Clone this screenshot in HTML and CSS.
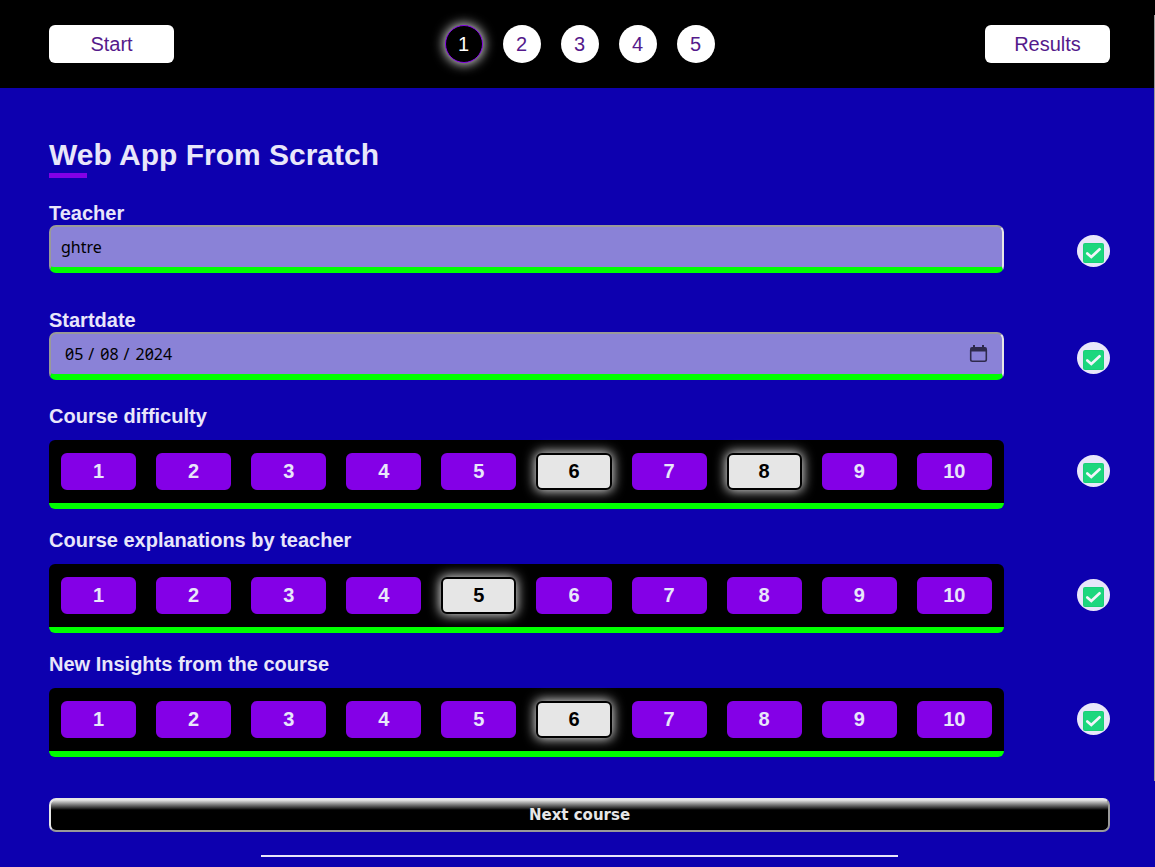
FILE: index.html
```
<!DOCTYPE html>
<html lang="en">
<head>
<meta charset="utf-8">
<meta name="viewport" content="width=device-width, initial-scale=1">
<title>Web App From Scratch</title>
<link rel="stylesheet" href="styles.css">
</head>
<body>
<svg class="sprite" aria-hidden="true">
  <symbol id="tick" viewBox="0 0 21 20">
    <rect width="21" height="20" rx="2" fill="#19cf78"/>
    <rect x="1" y="1" width="19" height="18" rx="1" fill="#1cd77e"/>
    <path d="M4.3 10.4 8.3 14 16.6 6.3" fill="none" stroke="#f4f4fb" stroke-width="2.7" stroke-linecap="round"/>
  </symbol>
</svg>
<header class="topbar">
  <a class="pill" href="#start">Start</a>
  <nav class="steps" aria-label="Courses">
    <a class="step current" href="#course-1" aria-current="page">1</a>
    <a class="step" href="#course-2">2</a>
    <a class="step" href="#course-3">3</a>
    <a class="step" href="#course-4">4</a>
    <a class="step" href="#course-5">5</a>
  </nav>
  <a class="pill" href="#results">Results</a>
</header>
<main class="page">
  <h1 class="title">Web App From Scratch</h1>
  <form class="form">
    <div class="field">
      <label class="label" for="teacher">Teacher</label>
      <div class="row">
        <input class="control" id="teacher" type="text" value="ghtre">
        <span class="check"><svg class="tick" aria-hidden="true"><use href="#tick"/></svg></span>
      </div>
    </div>
    <div class="field">
      <label class="label" for="startdate">Startdate</label>
      <div class="row">
        <input class="control date" id="startdate" type="date" value="2024-05-08">
        <span class="check"><svg class="tick" aria-hidden="true"><use href="#tick"/></svg></span>
      </div>
    </div>
    <fieldset class="rating">
      <legend class="label">Course difficulty</legend>
      <div class="row">
        <div class="scale">
          <label class="score"><input type="checkbox" name="difficulty"><span>1</span></label>
          <label class="score"><input type="checkbox" name="difficulty"><span>2</span></label>
          <label class="score"><input type="checkbox" name="difficulty"><span>3</span></label>
          <label class="score"><input type="checkbox" name="difficulty"><span>4</span></label>
          <label class="score"><input type="checkbox" name="difficulty"><span>5</span></label>
          <label class="score"><input type="checkbox" name="difficulty" checked><span>6</span></label>
          <label class="score"><input type="checkbox" name="difficulty"><span>7</span></label>
          <label class="score"><input type="checkbox" name="difficulty" checked><span>8</span></label>
          <label class="score"><input type="checkbox" name="difficulty"><span>9</span></label>
          <label class="score"><input type="checkbox" name="difficulty"><span>10</span></label>
        </div>
        <span class="check"><svg class="tick" aria-hidden="true"><use href="#tick"/></svg></span>
      </div>
    </fieldset>
    <fieldset class="rating">
      <legend class="label">Course explanations by teacher</legend>
      <div class="row">
        <div class="scale">
          <label class="score"><input type="radio" name="explanation"><span>1</span></label>
          <label class="score"><input type="radio" name="explanation"><span>2</span></label>
          <label class="score"><input type="radio" name="explanation"><span>3</span></label>
          <label class="score"><input type="radio" name="explanation"><span>4</span></label>
          <label class="score"><input type="radio" name="explanation" checked><span>5</span></label>
          <label class="score"><input type="radio" name="explanation"><span>6</span></label>
          <label class="score"><input type="radio" name="explanation"><span>7</span></label>
          <label class="score"><input type="radio" name="explanation"><span>8</span></label>
          <label class="score"><input type="radio" name="explanation"><span>9</span></label>
          <label class="score"><input type="radio" name="explanation"><span>10</span></label>
        </div>
        <span class="check"><svg class="tick" aria-hidden="true"><use href="#tick"/></svg></span>
      </div>
    </fieldset>
    <fieldset class="rating">
      <legend class="label">New Insights from the course</legend>
      <div class="row">
        <div class="scale">
          <label class="score"><input type="radio" name="insight"><span>1</span></label>
          <label class="score"><input type="radio" name="insight"><span>2</span></label>
          <label class="score"><input type="radio" name="insight"><span>3</span></label>
          <label class="score"><input type="radio" name="insight"><span>4</span></label>
          <label class="score"><input type="radio" name="insight"><span>5</span></label>
          <label class="score"><input type="radio" name="insight" checked><span>6</span></label>
          <label class="score"><input type="radio" name="insight"><span>7</span></label>
          <label class="score"><input type="radio" name="insight"><span>8</span></label>
          <label class="score"><input type="radio" name="insight"><span>9</span></label>
          <label class="score"><input type="radio" name="insight"><span>10</span></label>
        </div>
        <span class="check"><svg class="tick" aria-hidden="true"><use href="#tick"/></svg></span>
      </div>
    </fieldset>
    <button class="next" type="submit">Next course</button>
  </form>
  <hr class="divider">
</main>
<div class="scroll-thumb"></div>
</body>
</html>
```

FILE: styles.css
```
:root {
  --blue: #0d00af;
  --violet: #8400e7;
  --light: #e8e6fa;
  --green: #00ff00;
}

* {
  box-sizing: border-box;
}

body {
  margin: 0;
  background: var(--blue);
  color: var(--light);
  font-family: "Liberation Sans", Arial, sans-serif;
  font-size: 20px;
  line-height: 23px;
}

.sprite {
  display: none;
}

.topbar {
  display: flex;
  justify-content: space-between;
  align-items: center;
  padding: 25px 45px 25px 49px;
  background: #000;
}

.pill,
.step {
  display: flex;
  justify-content: center;
  align-items: center;
  height: 38px;
  background: #fff;
  color: #551a8b;
  text-decoration: none;
}

.pill {
  width: 125px;
  border-radius: 6px;
}

.steps {
  display: flex;
  gap: 20px;
}

.step {
  width: 38px;
  border-radius: 50%;
}

.step.current {
  border: 1px solid var(--violet);
  background: #000;
  color: #fff;
  box-shadow: 0 0 12px 1px #e6e6e6;
}

.page {
  padding: 49px 45px 9px 49px;
}

.title {
  margin: 0 0 24px;
  font-size: 30px;
  line-height: 36px;
}

.title::after {
  content: "";
  display: block;
  width: 38px;
  height: 5px;
  background: var(--violet);
}

.field {
  margin-bottom: 36px;
}

.field + .rating {
  margin-top: -11px;
}

.label {
  display: block;
  padding: 0;
  font-weight: bold;
}

.row {
  display: flex;
  justify-content: space-between;
  align-items: flex-start;
}

.control {
  width: 90%;
  height: 48px;
  padding: 0 10px;
  border: 2px solid;
  border-color: #999 #e6e6e6 var(--green) #999;
  border-bottom-width: 6px;
  border-radius: 7px;
  background: #8a82d7;
  color: #000;
  font: 16px "Noto Sans", sans-serif;
}

.date {
  padding: 0 14px;
  font-feature-settings: "zero";
}

.date::-webkit-datetime-edit-text {
  padding: 0 6px 0 5px;
}

.date::-webkit-datetime-edit-fields-wrapper {
  padding: 0;
}

.date::-webkit-datetime-edit-month-field,
.date::-webkit-datetime-edit-day-field,
.date::-webkit-datetime-edit-year-field {
  padding: 0;
}

.date::-webkit-calendar-picker-indicator {
  width: 19px;
  height: 18px;
  padding: 0;
  background: url("data:image/svg+xml,%3Csvg xmlns='http://www.w3.org/2000/svg' viewBox='0 0 19 18'%3E%3Cpath d='M1.7 5V14.500Q1.700 16.200 3.400 16.200H15.600Q17.300 16.200 17.300 14.500V5' fill='none' stroke='%232e2a4c' stroke-width='1.600'/%3E%3Cpath d='M1 6.500V4Q1 2 3 2H4V0H6V2H13V0H15V2H16Q18 2 18 4V6.500Z' fill='%232e2a4c'/%3E%3C/svg%3E") center / contain no-repeat;
}

.check {
  display: flex;
  justify-content: center;
  width: 33px;
  height: 32px;
  margin-top: 10px;
  padding-top: 8px;
  border-radius: 50%;
  background: var(--light);
}

.tick {
  width: 21px;
  height: 20px;
}

.rating {
  min-width: 0;
  margin: 0 0 20px;
  padding: 0;
  border: 0;
}

.rating .label {
  margin-bottom: 12px;
}

.rating .check {
  margin-top: 15px;
}

.scale {
  display: grid;
  grid-template-columns: repeat(10, 1fr);
  gap: 20px;
  width: 90%;
  padding: 13px 12px;
  border-bottom: 6px solid var(--green);
  border-radius: 6px;
  background: #000;
}

.score {
  position: relative;
  font-weight: bold;
  text-align: center;
}

.score input {
  position: absolute;
  inset: 0;
  width: 100%;
  height: 100%;
  margin: 0;
  opacity: 0;
}

.score span {
  display: block;
  padding: 5px 0;
  border: 2px solid var(--violet);
  border-radius: 6px;
  background: var(--violet);
}

.score input:checked + span {
  border-color: #000;
  background: #e6e6e6;
  color: #000;
  box-shadow: 0 0 12px 1px #e6e6e6;
}

.next {
  display: block;
  width: 100%;
  height: 34px;
  margin-top: 41px;
  padding: 0;
  border: 2px solid;
  border-color: #e6e6e6 #999 #999 #e6e6e6;
  border-radius: 7px;
  background: linear-gradient(#e6e6e6, #000 10px);
  background-origin: padding-box;
  color: #e6e6e6;
  font: bold 15px "DejaVu Sans", sans-serif;
}

.divider {
  width: 60%;
  height: 2px;
  margin: 23px auto 0;
  border: 0;
  background: var(--light);
}

.scroll-thumb {
  position: fixed;
  top: 15px;
  right: 0;
  width: 1px;
  height: 88.3vh;
  background: #999;
}
```
